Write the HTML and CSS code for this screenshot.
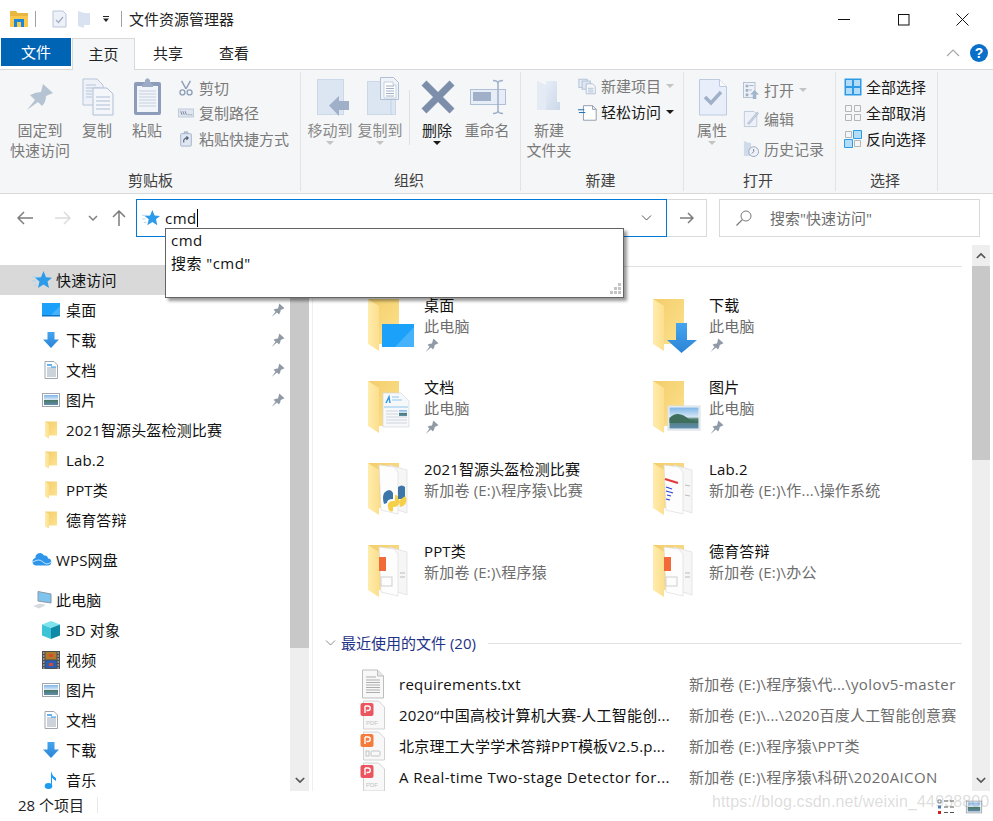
FILE: index.html
```html
<!DOCTYPE html>
<html lang="zh-CN">
<head>
<meta charset="utf-8">
<title>文件资源管理器</title>
<link rel="stylesheet" href="styles.css">
</head>
<body>
<svg class="defs" xmlns="http://www.w3.org/2000/svg">
  <defs>
    <linearGradient id="gFolder" x1="0" y1="0" x2="1" y2="1"><stop offset="0" stop-color="#f3cd6b"/><stop offset="1" stop-color="#fde28e"/></linearGradient>
    <linearGradient id="gFront" x1="0" y1="0" x2="1" y2="0"><stop offset="0" stop-color="#ffecac"/><stop offset="1" stop-color="#fcdf8e"/></linearGradient>
    <linearGradient id="gBlue" x1="0" y1="0" x2="0" y2="1"><stop offset="0" stop-color="#45a5f0"/><stop offset="1" stop-color="#2b84d6"/></linearGradient>
    <linearGradient id="gSky" x1="0" y1="0" x2="0" y2="1"><stop offset="0" stop-color="#7fb6e8"/><stop offset=".45" stop-color="#d5e6f4"/><stop offset=".55" stop-color="#4c7a6a"/><stop offset="1" stop-color="#5f8cb0"/></linearGradient>
    <linearGradient id="gNew" x1="0" y1="0" x2="1" y2="1"><stop offset="0" stop-color="#e6edf6"/><stop offset="1" stop-color="#ccd8e8"/></linearGradient>
    <symbol id="pin" viewBox="0 0 16 16"><path d="M1.500 15 L5.500 9.700 L3.500 7.800 Q6 6.600 8 6.600 L9.300 1.500 L14.500 6.300 L10.700 8 Q10.700 10.500 9 12.400 L7 10.400 Z" fill="#8f9aa6"/></symbol>
    <symbol id="star" viewBox="0 0 20 20"><path d="M0 7h6M0 11h4M2 15h3" stroke="#a9d4f5" stroke-width="1"/><path d="M11.500 1 L14 7.200 L20 7.700 L15.500 11.500 L17 18 L11.500 14.500 L6 18 L7.500 11.500 L3 7.700 L9 7.200 Z" fill="#2b9bea"/></symbol>
    <symbol id="desk" viewBox="0 0 20 20"><rect x="1" y="3" width="18" height="13" fill="#1ba1fa"/><path d="M9 16 L19 6 V16Z" fill="#45b2fb"/><rect x="1" y="15" width="18" height="1.500" fill="#0d75c4"/></symbol>
    <symbol id="down" viewBox="0 0 20 20"><path d="M6.500 2h7v7.500H18L10 18 2 9.500h4.500Z" fill="url(#gBlue)"/></symbol>
    <symbol id="doc" viewBox="0 0 20 20"><path d="M4 1.500h9l3.500 3.500v13.500H4Z" fill="#fff" stroke="#9fa6ad"/><path d="M6 5h5" stroke="#2e9ae6" stroke-width="1.500"/><path d="M6 8h9M6 10h9M6 12h9M6 14h9M6 16h9" stroke="#9aa7b5"/><path d="M10 7h5" stroke="#2e9ae6"/></symbol>
    <symbol id="pic" viewBox="0 0 20 20"><rect x="1.500" y="3.500" width="17" height="13" fill="#fff" stroke="#9fa6ad"/><rect x="3" y="5" width="14" height="10" fill="url(#gSky)"/></symbol>
    <symbol id="fold" viewBox="0 0 20 20"><path d="M4 1.500h12v14H7Z" fill="url(#gFolder)"/><path d="M4 1.500 L8 4 V18.500 L4 16.500Z" fill="url(#gFront)"/></symbol>
    <symbol id="cloud" viewBox="0 0 20 20"><path d="M4.500 15.500 A3.800 3.800 0 0 1 3.500 8 A4.500 4.500 0 0 1 12 5.500 A3.500 3.500 0 0 1 16 8.500 A3.500 3.500 0 0 1 15.500 15.500Z" fill="#2d96ea"/><path d="M1 12 Q7 8 11 12 T19 12" stroke="#bfe0fa" stroke-width="1" fill="none"/></symbol>
    <symbol id="pc" viewBox="0 0 20 20"><path d="M6 1.500 L19 4 V13 L6 11Z" fill="#7fc4ee" stroke="#8a98a6"/><path d="M1 16 L8 13.500 L14 15 L7 18.500Z" fill="#d5dadf"/></symbol>
    <symbol id="cube" viewBox="0 0 20 20"><path d="M10 1 L19 4.500 L10 8 L1 4.500Z" fill="#7fe3ee"/><path d="M1 4.500 L10 8 V19 L1 15.500Z" fill="#3cc4d6"/><path d="M19 4.500 L10 8 V19 L19 15.500Z" fill="#0f8aa6"/></symbol>
    <symbol id="film" viewBox="0 0 20 20"><rect x="1" y="1" width="18" height="18" fill="#4f4f4f"/><rect x="4.500" y="2" width="11" height="7.500" fill="#b0792c"/><rect x="4.500" y="10.500" width="11" height="7.500" fill="#2a5fb8"/><path d="M8 4h4v3H8ZM8 13h4v3H8Z" fill="#d84a2c"/><path d="M2 3h1.500M2 6h1.500M2 9h1.500M2 12h1.500M2 15h1.500M2 18h1.500M16.500 3h1.500M16.500 6h1.500M16.500 9h1.500M16.500 12h1.500M16.500 15h1.500M16.500 18h1.500" stroke="#ddd"/></symbol>
    <symbol id="music" viewBox="0 0 20 20"><ellipse cx="7.500" cy="16" rx="3.800" ry="3" fill="#1c9bf0"/><path d="M10 16 V1 Q11 6 15 8 V11 Q12 9 11 7.500 V16Z" fill="#1c9bf0"/></symbol>
    <symbol id="tile" viewBox="0 0 50 56"><path d="M1 2h31v45H12Z" fill="url(#gFolder)"/><path d="M1 2 L12 9 V54 L1 47Z" fill="url(#gFront)"/></symbol>
    <symbol id="txt" viewBox="0 0 24 30"><path d="M1.500 1h15l6 6v22h-21Z" fill="#f8f8f8" stroke="#bdbdbd"/><path d="M16.500 1v6h6" fill="#e6e6e6" stroke="#bdbdbd"/><path d="M5 8h10M5 11h14M5 13.500h14M5 16h14M5 18.500h14M5 21h14M5 23.500h14" stroke="#adadad"/></symbol>
    <symbol id="pdf" viewBox="0 0 26 30"><path d="M3.500 1h15l6 6v22h-21Z" fill="#f8f8f8" stroke="#d2d2d2"/><rect x="0.500" y="3" width="13" height="13" rx="2" fill="#ea5560"/><path d="M5 6 h3a2.200 2.200 0 0 1 0 4.500H6.500 M5 6 v7" stroke="#fff" stroke-width="1.400" fill="none"/><text x="6" y="25" class="pdf-t">PDF</text></symbol>
    <symbol id="ppt" viewBox="0 0 26 30"><path d="M3.500 1h15l6 6v22h-21Z" fill="#f8f8f8" stroke="#d2d2d2"/><rect x="0.500" y="3" width="13" height="13" rx="2" fill="#f57b3b"/><path d="M5 6 h3a2.200 2.200 0 0 1 0 4.500H6.500 M5 6 v7" stroke="#fff" stroke-width="1.400" fill="none"/><rect x="6" y="20" width="3" height="5" fill="none" stroke="#c4c4c4"/><rect x="11" y="20" width="9" height="5" rx="1" fill="none" stroke="#c4c4c4"/></symbol>
    <symbol id="pages" viewBox="0 0 50 56"><path d="M1 2h31v45H12Z" fill="url(#gFolder)"/><path d="M22 4 L40 9 V52 L28 48Z" fill="#f6f6f6" stroke="#dcdcdc" stroke-width=".7"/><path d="M12 4 L27 6 L31 11 V53 L14 49Z" fill="#fdfdfd" stroke="#dcdcdc" stroke-width=".7"/><path d="M1 2 L12 9 V54 L1 47Z" fill="url(#gFront)"/></symbol>
  </defs>
</svg>

<div class="titlebar">
  <svg class="t-app" viewBox="0 0 18 18"><path d="M0 1h6l1.500 2H18v3H0Z" fill="#e9b63f"/><path d="M0 6h18v11H0Z" fill="#f8c94e"/><path d="M4 9h10v8h-3v-5H7v5H4Z" fill="#1b87d8"/></svg>
  <span class="t-sep"></span>
  <svg class="t-q1" viewBox="0 0 15 18"><path d="M1 1h10l3 3v13H1Z" fill="#eef2f8" stroke="#b8c5d8"/><path d="M4 10l2.500 2.500L11 7" fill="none" stroke="#a0aec2" stroke-width="1.300"/></svg>
  <svg class="t-q2" viewBox="0 0 14 18"><path d="M1 1 L7 3 H13 V15 H7 V18 L1 16Z" fill="#d8e2f0"/></svg>
  <svg class="t-drop" viewBox="0 0 8 7"><path d="M1 .5h6" stroke="#222"/><path d="M1 2.500h6L4 6Z" fill="#222"/></svg>
  <span class="t-sep t-sep2"></span>
  <span class="t-title">文件资源管理器</span>
  <span class="t-spacer"></span>
  <svg class="w-btn w-min" viewBox="0 0 13 13"><path d="M0 6.500h12" stroke="#111"/></svg>
  <svg class="w-btn w-max" viewBox="0 0 13 13"><rect x="1.500" y="1.500" width="10.500" height="10.500" fill="none" stroke="#111"/></svg>
  <svg class="w-btn" viewBox="0 0 13 13"><path d="M.5.500l12 12M12.500.500l-12 12" stroke="#111"/></svg>
</div>

<div class="tabs">
  <span class="tab tab-file">文件</span>
  <span class="tab tab-active">主页</span>
  <span class="tab tab-plain">共享</span>
  <span class="tab tab-plain">查看</span>
  <span class="t-spacer"></span>
  <svg class="collapse" viewBox="0 0 14 8"><path d="M1 7l6-6 6 6" fill="none" stroke="#a8a8a8" stroke-width="1.200"/></svg>
  <span class="help">?</span>
</div>

<div class="ribbon">
  <section class="group g1">
    <div class="g-body">
      <div class="big w60"><svg class="big-i" viewBox="0 0 40 40"><path d="M7 33 L15 23 L10 18 Q16 15 21 15 L23 7 L33 16 L26 19 Q26 25 22 29 L18 25 Z" fill="#b6c3d3"/></svg><span>固定到<br>快速访问</span></div>
      <div class="big w50 ml2"><svg class="big-i" viewBox="0 0 40 40"><path d="M6 2h14l6 6v20H6Z" fill="#eef2f8" stroke="#b6c5da"/><path d="M9 8h10M9 11h14M9 14h6M9 17h6M9 20h6" stroke="#b6c5da"/><path d="M16 11h14l6 6v21H16Z" fill="#f4f6fa" stroke="#aebfd6"/><path d="M19 20h14M19 24h14M19 28h14M19 32h14" stroke="#aebfd6"/></svg><span>复制</span></div>
      <div class="big w50"><svg class="big-i" viewBox="0 0 40 40"><rect x="7" y="5" width="27" height="33" rx="2" fill="#8c9cba"/><rect x="10" y="9" width="21" height="26" fill="#f1f4f9"/><path d="M12 14h17M12 17h17M12 20h17M12 23h17M12 26h17M12 29h17" stroke="#c4cfe0"/><path d="M15 8 L18 5 V3 L20.500 1 L23 3 V5 L26 8 V10 H15Z" fill="#9cabc6"/></svg><span>粘贴</span></div>
      <div class="col small-col c-g1">
        <div class="s-row"><svg class="s-i" viewBox="0 0 18 18"><path d="M4 1l5 9M14 1L9 10" stroke="#8e9fb8" stroke-width="1.600"/><circle cx="5" cy="14" r="2.800" fill="none" stroke="#8e9fb8" stroke-width="1.500"/><circle cx="13" cy="14" r="2.800" fill="none" stroke="#8e9fb8" stroke-width="1.500"/></svg><span>剪切</span></div>
        <div class="s-row"><svg class="s-i" viewBox="0 0 18 18"><rect x=".5" y="4.500" width="17" height="9" fill="#dfe6f0" stroke="#bcc8d8"/><path d="M3 7l1.500 4M5.500 7L7 11M8 7l1.500 4" stroke="#6c7a90"/><path d="M11 11h1M13 11h1M15 11h1" stroke="#6c7a90"/></svg><span>复制路径</span></div>
        <div class="s-row"><svg class="s-i" viewBox="0 0 18 18"><rect x="3" y="3" width="12" height="14" rx="1" fill="#dfe6f0" stroke="#9fb0c8"/><path d="M7 3V1h4v2" fill="#b4c3d8" stroke="#9fb0c8"/><path d="M6.500 13v-3l2-2H11M9.500 6l2 2-2 2" fill="none" stroke="#4a5a74" stroke-width="1.200"/></svg><span>粘贴快捷方式</span></div>
      </div>
    </div>
    <div class="g-label">剪贴板</div>
  </section>

  <section class="group g2">
    <div class="g-body">
      <div class="big w50"><svg class="big-i" viewBox="0 0 40 40"><rect x="7.500" y="2.500" width="26" height="35" fill="#dce6f3" stroke="#ccd8e8"/><path d="M39 24v9H29v6L19 28.500 29 19v5Z" fill="#a0b0c8"/></svg><span class="dis-t">移动到</span><i class="caret c-dis"></i></div>
      <div class="big w50"><svg class="big-i" viewBox="0 0 40 40"><rect x="7.500" y="4.500" width="28" height="33" fill="#dce6f3" stroke="#ccd8e8"/><path d="M31 5v33" stroke="#c4d2e4"/><path d="M20.500 .5h13l5 5v17h-18Z" fill="#f0f3f8" stroke="#aebfd6"/><path d="M24 5h9v3h3v13H24Z" fill="#fff" stroke="#aebfd6" stroke-width=".7"/><path d="M26 9h8M26 11.500h8M26 14h8M26 16.500h8M26 19h8" stroke="#a0aec2"/></svg><span class="dis-t">复制到</span><i class="caret c-dis"></i></div>
      <span class="v-sep"></span>
      <div class="big w50"><svg class="big-i" viewBox="0 0 40 40"><path d="M7 6l28 28M35 6L7 34" stroke="#7d8eab" stroke-width="7"/></svg><span class="dark">删除</span><i class="caret"></i></div>
      <div class="big w50"><svg class="big-i" viewBox="0 0 40 40"><rect x="3.500" y="12.500" width="35" height="15" fill="#e6edf6" stroke="#aebfd6"/><rect x="6" y="15" width="18" height="9" fill="#a0b0c8"/><path d="M26 3.500q5 0 5 3v27q0 3-5 3M36 3.500q-5 0-5 3v27q0 3 5 3" fill="none" stroke="#9fb0c8" stroke-width="1.500"/></svg><span>重命名</span></div>
    </div>
    <div class="g-label">组织</div>
  </section>

  <section class="group g3">
    <div class="g-body">
      <div class="big w50"><svg class="big-i" viewBox="0 0 40 40"><path d="M8 4 L17 8 V33 H8Z" fill="#e4ebf5"/><path d="M17 4h11v21h3v8H17Z" fill="url(#gNew)"/></svg><span>新建<br>文件夹</span></div>
      <div class="col small-col c-g3">
        <div class="s-row"><svg class="s-i s-i21" viewBox="0 0 22 18"><rect x="1" y="1" width="9" height="9" fill="#e6edf6" stroke="#aebfd6"/><rect x="4.500" y="3" width="9" height="9" fill="#dfe6f0" stroke="#aebfd6"/><path d="M9 6h7l3 3v8H9Z" fill="#f4f6fa" stroke="#aebfd6"/><path d="M11 11h6M11 13h6M11 15h6" stroke="#aebfd6"/></svg><span>新建项目</span><i class="caret-s c-dis"></i></div>
        <div class="s-row s-dark"><svg class="s-i s-i21" viewBox="0 0 22 18"><path d="M6 1.500h10l4 4v12H6Z" fill="#fff" stroke="#8c96a4"/><path d="M16 1.500v4h4" fill="none" stroke="#8c96a4"/><path d="M0 6h7M1 9h7" stroke="#2273b8" stroke-width="1.200"/></svg><span>轻松访问</span><i class="caret-s"></i></div>
      </div>
    </div>
    <div class="g-label">新建</div>
  </section>

  <section class="group g4">
    <div class="g-body">
      <div class="big w50"><svg class="big-i" viewBox="0 0 40 40"><path d="M7.500 2.500h20l7 7v28.500h-27Z" fill="#e9effa" stroke="#bccbe0"/><path d="M27.500 2.500v7h7" fill="#f7f9fc" stroke="#bccbe0"/><path d="M13 20l6 6 10-11" fill="none" stroke="#a0b0c8" stroke-width="3.500"/></svg><span>属性</span><i class="caret c-dis"></i></div>
      <div class="col small-col c-g4">
        <div class="s-row s-r30"><svg class="s-i" viewBox="0 0 18 20"><rect x=".5" y="1.500" width="13" height="17" fill="#eef2f8" stroke="#b0bdce"/><path d="M3 4h3v3H3ZM3 9h3v3H3ZM3 14h3v3H3Z" fill="#a0aec2"/><path d="M7 5h5M7 10h3" stroke="#a0aec2"/><path d="M13 10l5 5h-3v5h-4v-5H8Z" fill="#a0b4cc"/></svg><span>打开</span><i class="caret-s c-dis"></i></div>
        <div class="s-row s-r30"><svg class="s-i" viewBox="0 0 18 20"><path d="M1.500 1.500h11l3 3v14h-14Z" fill="#eef2f8" stroke="#b8c6da"/><path d="M5 15L16 2l1.500 1.500L7 16Z" fill="#c5d1e1" stroke="#a0aec2" stroke-width=".6"/></svg><span>编辑</span></div>
        <div class="s-row s-r30"><svg class="s-i" viewBox="0 0 18 20"><path d="M1 1l5 2h3v15H1Z" fill="#cfdbea"/><circle cx="12" cy="13" r="5.500" fill="#eef2f8" stroke="#8e9fb8"/><path d="M12 10v3l-2 2" stroke="#6c7a90" fill="none"/></svg><span>历史记录</span></div>
      </div>
    </div>
    <div class="g-label">打开</div>
  </section>

  <section class="group g5">
    <div class="g-body">
      <div class="col small-col c-g5">
        <div class="s-row s-dark"><svg class="s-i" viewBox="0 0 18 18"><rect x=".5" y=".5" width="17" height="17" fill="#2e9ae6"/><path d="M2 2h6v6H2ZM10 2h6v6h-6ZM2 10h6v6H2ZM10 10h6v6h-6Z" fill="#b2dcf8"/></svg><span>全部选择</span></div>
        <div class="s-row s-dark"><svg class="s-i" viewBox="0 0 18 18"><path d="M1.500 1.500h6v6h-6ZM10.500 1.500h6v6h-6ZM1.500 10.500h6v6h-6ZM10.500 10.500h6v6h-6Z" fill="none" stroke="#b5b5b5"/></svg><span>全部取消</span></div>
        <div class="s-row s-dark"><svg class="s-i" viewBox="0 0 18 18"><path d="M1.500 1.500h6v6h-6ZM10.500 10.500h6v6h-6Z" fill="none" stroke="#b5b5b5"/><path d="M9.500 .5h8v8h-8ZM.5 9.500h8v8h-8Z" fill="#b2dcf8" stroke="#2e9ae6"/></svg><span>反向选择</span></div>
      </div>
    </div>
    <div class="g-label">选择</div>
  </section>
</div>

<div class="addr-row">
  <svg class="n-back" viewBox="0 0 16 14"><path d="M16 7H1M7 1L1 7l6 6" fill="none" stroke="#7c7c7c" stroke-width="1.500"/></svg>
  <svg class="n-fwd" viewBox="0 0 16 14"><path d="M0 7h15M9 1l6 6-6 6" fill="none" stroke="#dcdcdc" stroke-width="1.500"/></svg>
  <svg class="n-drop" viewBox="0 0 10 7"><path d="M1 1l4 4 4-4" fill="none" stroke="#808080" stroke-width="1.500"/></svg>
  <svg class="n-up" viewBox="0 0 14 16"><path d="M7 16V1M1 7l6-6 6 6" fill="none" stroke="#7c7c7c" stroke-width="1.500"/></svg>
  <div class="addr">
    <svg class="a-star"><use href="#star"/></svg>
    <span class="a-text">cmd</span><span class="a-caret"></span>
    <span class="t-spacer"></span>
    <svg class="a-chev" viewBox="0 0 10 6"><path d="M.5.500L5 5 9.500.500" fill="none" stroke="#555"/></svg>
  </div>
  <div class="go"><svg class="go-i" viewBox="0 0 14 12"><path d="M0 6h13M8 1l5 5-5 5" fill="none" stroke="#7c7c7c" stroke-width="1.500"/></svg></div>
  <div class="search">
    <svg class="s-glass" viewBox="0 0 16 16"><circle cx="10" cy="6" r="5" fill="none" stroke="#777"/><path d="M6.300 9.700L.5 15.500" stroke="#777" stroke-width="1.200"/></svg>
    <span>搜索"快速访问"</span>
  </div>
  <div class="popup">
    <div>cmd</div>
    <div>搜索 "cmd"</div>
    <svg class="grip" viewBox="0 0 12 12"><path d="M9 0h3v3H9ZM5 4h3v3H5ZM9 4h3v3H9ZM1 8h3v3H1ZM5 8h3v3H5ZM9 8h3v3H9Z" fill="#c4c4c4"/></svg>
  </div>
</div>

<div class="content">
  <nav class="sidebar">
    <div class="row l1 sel"><svg class="r-i"><use href="#star"/></svg><span>快速访问</span></div>
    <div class="row l2"><svg class="r-i"><use href="#desk"/></svg><span>桌面</span><svg class="r-pin"><use href="#pin"/></svg></div>
    <div class="row l2"><svg class="r-i"><use href="#down"/></svg><span>下载</span><svg class="r-pin"><use href="#pin"/></svg></div>
    <div class="row l2"><svg class="r-i"><use href="#doc"/></svg><span>文档</span><svg class="r-pin"><use href="#pin"/></svg></div>
    <div class="row l2"><svg class="r-i"><use href="#pic"/></svg><span>图片</span><svg class="r-pin"><use href="#pin"/></svg></div>
    <div class="row l2"><svg class="r-i"><use href="#fold"/></svg><span>2021智源头盔检测比赛</span></div>
    <div class="row l2"><svg class="r-i"><use href="#fold"/></svg><span>Lab.2</span></div>
    <div class="row l2"><svg class="r-i"><use href="#fold"/></svg><span>PPT类</span></div>
    <div class="row l2"><svg class="r-i"><use href="#fold"/></svg><span>德育答辩</span></div>
    <div class="row l1 mt10"><svg class="r-i"><use href="#cloud"/></svg><span>WPS网盘</span></div>
    <div class="row l1 mt10"><svg class="r-i"><use href="#pc"/></svg><span>此电脑</span></div>
    <div class="row l2"><svg class="r-i"><use href="#cube"/></svg><span>3D 对象</span></div>
    <div class="row l2"><svg class="r-i"><use href="#film"/></svg><span>视频</span></div>
    <div class="row l2"><svg class="r-i"><use href="#pic"/></svg><span>图片</span></div>
    <div class="row l2"><svg class="r-i"><use href="#doc"/></svg><span>文档</span></div>
    <div class="row l2"><svg class="r-i"><use href="#down"/></svg><span>下载</span></div>
    <div class="row l2"><svg class="r-i"><use href="#music"/></svg><span>音乐</span></div>
  </nav>
  <div class="sbar">
    <div class="sb-btn"><svg class="sb-a" viewBox="0 0 12 8"><path d="M1 7l5-5 5 5" fill="none" stroke="#555" stroke-width="2"/></svg></div>
    <div class="sb-thumb th-nav"></div>
    <div class="sb-track"></div>
    <div class="sb-btn"><svg class="sb-a" viewBox="0 0 12 8"><path d="M1 1l5 5 5-5" fill="none" stroke="#555" stroke-width="2"/></svg></div>
  </div>
  <main class="main">
    <div class="sec sec1"><svg class="sec-c" viewBox="0 0 10 6"><path d="M.5.500L5 5 9.500.500" fill="none" stroke="#8a8a8a"/></svg><span class="sec-t">常用文件夹 (8)</span><span class="sec-l"></span></div>
    <div class="tiles">
      <div class="tile"><svg class="tile-i" viewBox="0 0 50 56"><use href="#tile" width="50" height="56"/><rect x="15" y="27" width="32" height="23" fill="#1ba1fa"/><path d="M28 50 L47 30 V50Z" fill="#45b2fb"/></svg><div class="tile-t"><div class="n">桌面</div><div class="p">此电脑</div><svg class="tile-pin"><use href="#pin"/></svg></div></div>
      <div class="tile"><svg class="tile-i" viewBox="0 0 50 56"><use href="#tile" width="50" height="56"/><path d="M24 26h11v17h10L29.500 56 15 43h9Z" fill="url(#gBlue)"/></svg><div class="tile-t"><div class="n">下载</div><div class="p">此电脑</div><svg class="tile-pin"><use href="#pin"/></svg></div></div>
      <div class="tile"><svg class="tile-i" viewBox="0 0 50 56"><use href="#tile" width="50" height="56"/><path d="M16 14h18l8 8v26H16Z" fill="#f7f8fa" stroke="#d5d8dc" stroke-width=".7"/><path d="M19 24 l3-6 1 6" fill="none" stroke="#2e9ae6" stroke-width="1.500"/><path d="M25 18h7M25 21h10M17 28h24" stroke="#8cc8f0"/><path d="M19 32h12M19 35h12M19 38h21M19 41h21M19 44h21" stroke="#cfd4da"/><rect x="32" y="31" width="8" height="6" fill="url(#gSky)"/></svg><div class="tile-t"><div class="n">文档</div><div class="p">此电脑</div><svg class="tile-pin"><use href="#pin"/></svg></div></div>
      <div class="tile"><svg class="tile-i" viewBox="0 0 50 56"><use href="#tile" width="50" height="56"/><rect x="16" y="27" width="32" height="24" fill="#f2f4f6" stroke="#d8dde2"/><rect x="17.500" y="28.500" width="29" height="21" fill="url(#gSky)"/><path d="M17.500 39 Q26 30 38 41 L46 42 V44 H17.500Z" fill="#3f6e5c"/></svg><div class="tile-t"><div class="n">图片</div><div class="p">此电脑</div><svg class="tile-pin"><use href="#pin"/></svg></div></div>
      <div class="tile"><svg class="tile-i" viewBox="0 0 50 56"><use href="#pages" width="50" height="56"/><path d="M17 32q6-6 9 0v6q-6 0-6 4l-3 1q-2-6 0-11Z" fill="#3d77aa"/><path d="M21 46q-1-7 7-6v-6q5 0 4 8 0 4-6 4v4q-4 2-5-4Z" fill="#f5cf47"/><path d="M31 26q4-3 7 0v12h-7Z" fill="#3d77aa"/><path d="M32 40q6-6 7-4 2 8-6 10Z" fill="#f5cf47"/></svg><div class="tile-t"><div class="n">2021智源头盔检测比赛</div><div class="p">新加卷 (E:)\程序猿\比赛</div></div></div>
      <div class="tile"><svg class="tile-i" viewBox="0 0 50 56"><use href="#pages" width="50" height="56"/><path d="M13 18 l13 4" stroke="#e5383b" stroke-width="2"/><path d="M14 26l6 2M14 30l7 2M15 34l4 1M14 38l4 1" stroke="#2a3fd8" stroke-width="1.200"/><path d="M33 24l5 1M33 34l5 1" stroke="#bbb"/></svg><div class="tile-t"><div class="n">Lab.2</div><div class="p">新加卷 (E:)\作...\操作系统</div></div></div>
      <div class="tile"><svg class="tile-i" viewBox="0 0 50 56"><use href="#pages" width="50" height="56"/><rect x="12" y="14" width="7" height="14" fill="#f26a3a"/><rect x="14" y="34" width="11" height="9" fill="none" stroke="#cfcfcf"/><path d="M33 30h5M33 34h5" stroke="#bbb"/></svg><div class="tile-t"><div class="n">PPT类</div><div class="p">新加卷 (E:)\程序猿</div></div></div>
      <div class="tile"><svg class="tile-i" viewBox="0 0 50 56"><use href="#pages" width="50" height="56"/><rect x="12" y="14" width="7" height="14" fill="#f26a3a"/><rect x="14" y="34" width="11" height="9" fill="none" stroke="#cfcfcf"/><path d="M33 30h5M33 34h5" stroke="#bbb"/></svg><div class="tile-t"><div class="n">德育答辩</div><div class="p">新加卷 (E:)\办公</div></div></div>
    </div>
    <div class="sec sec2"><svg class="sec-c" viewBox="0 0 10 6"><path d="M.5.500L5 5 9.500.500" fill="none" stroke="#8a8a8a"/></svg><span class="sec-t">最近使用的文件 (20)</span><span class="sec-l"></span></div>
    <div class="files">
      <div class="file"><svg class="f-i"><use href="#txt" x="1" width="24" height="30"/></svg><span class="f-n f-lat">requirements.txt</span><span class="f-p">新加卷 (E:)\程序猿\代...\<span class="lat">yolov5-master</span></span></div>
      <div class="file"><svg class="f-i"><use href="#pdf"/></svg><span class="f-n">2020“中国高校计算机大赛-人工智能创...</span><span class="f-p">新加卷 (E:)\...\2020百度人工智能创意赛</span></div>
      <div class="file"><svg class="f-i"><use href="#ppt"/></svg><span class="f-n">北京理工大学学术答辩PPT模板V2.5.p...</span><span class="f-p">新加卷 (E:)\程序猿\PPT类</span></div>
      <div class="file"><svg class="f-i"><use href="#pdf"/></svg><span class="f-n f-wide">A Real-time Two-stage Detector for...</span><span class="f-p">新加卷 (E:)\程序猿\科研\<span class="lat">2020AICON</span></span></div>
    </div>
  </main>
  <div class="sbar sbar-r">
    <div class="sb-btn"><svg class="sb-a" viewBox="0 0 12 8"><path d="M1 7l5-5 5 5" fill="none" stroke="#555" stroke-width="2"/></svg></div>
    <div class="sb-thumb th-main"></div>
    <div class="sb-track"></div>
    <div class="sb-btn"><svg class="sb-a" viewBox="0 0 12 8"><path d="M1 1l5 5 5-5" fill="none" stroke="#555" stroke-width="2"/></svg></div>
  </div>
</div>

<footer class="status">
  <span class="st-count">28 个项目</span>
  <span class="st-div"></span>
  <span class="t-spacer"></span>
  <svg class="st-v1" viewBox="0 0 18 16"><path d="M1 1h3v3H1Z" fill="none" stroke="#7a8a9a"/><path d="M1 6.500h3v3H1Z" fill="#4a7ab0"/><path d="M1 12h3v3H1Z" fill="#c22"/><path d="M7 2h4M13 2h4M7 8h4M13 8h4M7 13.500h4M13 13.500h4" stroke="#555"/></svg>
  <svg class="st-v2"><use href="#pic" width="18" height="18"/></svg>
  <span class="wm">https://blog.csdn.net/weixin_44938800</span>
</footer>
</body>
</html>
```

FILE: styles.css
```css
* { box-sizing: border-box; }
html, body { margin: 0; padding: 0; }
body {
  position: relative;
  width: 993px;
  height: 821px;
  overflow: hidden;
  background: #fff;
  color: #1a1a1a;
  font: 15px/20px "Open Sans", "Noto Sans CJK SC", sans-serif;
}
.defs { display: block; width: 0; height: 0; }
svg { display: block; flex: none; }
.t-spacer { flex: 1; }
.pdf-t { font: 6px "Liberation Sans", sans-serif; fill: #c4c4c4; }

/* title bar */
.titlebar { display: flex; align-items: center; height: 38px; padding-left: 10px; }
.t-app { width: 18px; height: 18px; }
.t-sep { width: 1px; height: 16px; background: #a0a0a0; margin-left: 7px; }
.t-q1 { width: 15px; height: 18px; margin-left: 16px; }
.t-q2 { width: 14px; height: 18px; margin-left: 10px; }
.t-drop { width: 8px; height: 7px; margin-left: 11px; }
.t-sep2 { margin-left: 11px; }
.t-title { margin-left: 7px; color: #222; }
.w-btn { width: 13px; height: 13px; }
.w-min { margin-right: 46px; }
.w-max { margin-right: 46px; }
.titlebar .w-btn:last-child { margin-right: 24px; }

/* tabs */
.tabs { display: flex; align-items: flex-start; height: 32px; padding-left: 1px; position: relative; z-index: 1; }
.tab { display: flex; align-items: center; justify-content: center; height: 32px; }
.tab-file { width: 70px; height: 28px; background: #0064b4; color: #fff; }
.tab-active { width: 63px; margin-left: 1px; background: #f5f6f7; border: 1px solid #d9d9d9; border-bottom: 0; padding-bottom: 2px; color: #222; }
.tab-plain { width: 66px; padding-bottom: 2px; color: #222; }
.collapse { width: 14px; height: 8px; margin-top: 11px; margin-right: 10px; }
.help { width: 18px; height: 18px; margin: 6px 5px 0 0; border-radius: 50%; background: #0a6fc9; color: #fff; font: 700 14px/18px "Liberation Sans", sans-serif; text-align: center; }

/* ribbon */
.ribbon { display: flex; height: 125px; margin-top: -1px; background: #f5f6f7; border-top: 1px solid #d9d9d9; border-bottom: 1px solid #d9d9d9; color: #7a7a7a; }
.group { display: flex; flex-direction: column; position: relative; height: 123px; }
.group::after { content: ""; position: absolute; right: 0; top: 2px; bottom: 2px; width: 1px; background: #e2e3e4; }
.g1 { width: 301px; }
.g2 { width: 220px; }
.g3 { width: 163px; }
.g4 { width: 152px; }
.g5 { width: 102px; }
.g-body { display: flex; flex: 1; }
.g1 .g-body { padding-left: 10px; }
.g2 .g-body { padding-left: 4px; }
.g3 .g-body { padding-left: 3px; }
.g4 .g-body { padding-left: 3px; }
.g5 .g-body { padding-left: 7px; }
.g-label { height: 23px; padding-bottom: 3px; text-align: center; color: #3f3f3f; line-height: 20px; }
.g2 .g-label, .g3 .g-label, .g4 .g-label, .g5 .g-label { padding-right: 4px; }
.big { display: flex; flex-direction: column; align-items: center; text-align: center; white-space: nowrap; }
.big-i { width: 40px; height: 40px; margin: 7px 0 3px; }
.w60 { width: 60px; }
.w50 { width: 50px; }
.ml2 { margin-left: 2px; }
.dark { color: #1a1a1a; }
.dis-t { color: #8a8a8a; }
.caret { display: block; width: 0; height: 0; margin-top: 1px; border: 4px solid transparent; border-bottom: 0; border-top-color: #1a1a1a; }
.caret-s { display: block; width: 0; height: 0; border: 4px solid transparent; border-bottom: 0; border-top-color: #1a1a1a; }
.c-dis { border-top-color: #c4c4c4; }
.v-sep { width: 1px; height: 55px; margin: 20px 2px 0 4px; background: #dfe0e1; }
.col { display: flex; flex-direction: column; }
.small-col { padding-top: 5px; }
.c-g1 { margin-left: 5px; padding-top: 5px; }
.c-g3 { margin-left: 4px; padding-top: 3px; }
.c-g4 { margin-left: 5px; }
.c-g5 { padding-top: 4px; }
.s-row { display: flex; align-items: center; height: 26px; gap: 5px; white-space: nowrap; }
.c-g1 .s-row { height: 25.5px; }
.s-r30 { height: 29.5px; }
.s-dark { color: #1a1a1a; }
.s-i { width: 16px; height: 18px; margin-left: 1px; }
.s-i.s-i21 { width: 20px; height: 17px; margin-left: 0; }
.c-g3 .s-row { gap: 3px; }
.c-g3 .caret-s { margin-left: 2px; }
.c-g5 .s-row { gap: 4px; }
.c-g5 .s-i { width: 18px; height: 18px; }

/* address row */
.addr-row { display: flex; align-items: flex-start; height: 51px; padding-top: 5px; position: relative; }
.n-back { width: 16px; height: 14px; margin: 12px 0 0 17px; }
.n-fwd { width: 16px; height: 14px; margin: 12px 0 0 22px; }
.n-drop { width: 10px; height: 7px; margin: 16px 0 0 17px; }
.n-up { width: 14px; height: 16px; margin: 11px 0 0 14px; }
.addr { display: flex; align-items: center; width: 531px; height: 38px; margin-left: 10px; padding: 0 14px 0 5px; border: 1px solid #0078d7; color: #111; }
.a-star { width: 18px; height: 18px; }
.a-text { margin-left: 5px; letter-spacing: .5px; }
.a-caret { width: 1px; height: 18px; background: #000; margin-left: 0; }
.a-chev { width: 11px; height: 6px; }
.go { display: flex; align-items: center; justify-content: center; width: 40px; height: 38px; border: 1px solid #d9d9d9; border-left: 0; }
.go-i { width: 14px; height: 12px; }
.search { display: flex; align-items: center; width: 261px; height: 38px; margin-left: 12px; padding-left: 16px; border: 1px solid #d9d9d9; color: #6d6d6d; }
.s-glass { width: 16px; height: 16px; margin-right: 18px; }
.popup { position: absolute; left: 165px; top: 34px; z-index: 5; width: 459px; height: 70px; padding-left: 5px; background: #fff; border: 1px solid #646464; box-shadow: 3px 3px 3px rgba(0,0,0,.4); line-height: 23px; letter-spacing: .45px; color: #111; }
.grip { position: absolute; right: 2px; bottom: 2px; width: 12px; height: 12px; }

/* content */
.content { display: flex; height: 546px; }
.sidebar { flex: none; width: 290px; height: 546px; padding-top: 20px; overflow: hidden; }
.row { display: flex; align-items: center; height: 30px; color: #111; white-space: nowrap; letter-spacing: .15px; }
.l1 { padding-left: 32px; gap: 4px; }
.l2 { padding-left: 41px; gap: 5px; }
.sel { background: #d9d9d9; }
.mt10 { margin-top: 10px; }
.r-i { width: 20px; height: 20px; }
.r-pin { width: 16px; height: 16px; margin-left: auto; margin-right: 4px; }
.sbar { display: flex; flex-direction: column; width: 19px; background: #eee; flex: none; }
.sb-btn { display: flex; align-items: center; justify-content: center; height: 21px; flex: none; }
.sb-a { width: 10px; height: 7px; }
.sb-thumb { background: #c8c8c8; flex: none; }
.th-nav { height: 382px; }
.th-main { height: 194px; }
.sb-track { flex: 1; }
.sbar-r { width: 18px; }
.main { flex: none; width: 660px; height: 546px; overflow: hidden; margin-left: 3px; padding: 8px 10px 0 12px; border-left: 1px solid #efefef; }
.sec { display: flex; align-items: center; height: 26px; color: #1e3287; }
.sec-c { width: 11px; height: 6px; margin-right: 5px; }
.sec-l { flex: 1; height: 1px; margin-left: 12px; background: #e2e2e2; }
.sec2 { margin-top: 7px; }
.tiles { display: grid; grid-template-columns: 285px 285px; margin: 16px 0 0 42px; }
.tile { display: flex; height: 82px; }
.tile-i { width: 50px; height: 56px; margin: 2px 7px 0 0; }
.tile-t { line-height: 21px; }
.n { color: #111; height: 21px; white-space: nowrap; letter-spacing: .15px; }
.p { color: #6d6d6d; height: 21px; white-space: nowrap; letter-spacing: .2px; }
.tile-pin { width: 16px; height: 16px; }
.files { margin-top: 12px; padding-left: 35px; }
.file { display: flex; align-items: center; height: 31px; white-space: nowrap; }
.f-i { width: 26px; height: 30px; margin-right: 13px; }
.f-n { flex: none; width: 290px; color: #111; letter-spacing: .2px; }
.f-lat { letter-spacing: .25px; }
.f-wide { letter-spacing: .43px; }
.f-p { color: #6d6d6d; letter-spacing: .2px; }
.lat { letter-spacing: .4px; }

/* status */
.status { display: flex; align-items: center; height: 29px; padding: 0 0 2px 18px; position: relative; color: #222; }
.st-count { width: 78px; }
.st-div { width: 1px; height: 16px; background: #e8e8e8; margin-left: 1px; }
.st-v1 { width: 18px; height: 16px; margin: 4px 10px 0 0; }
.st-v2 { width: 18px; height: 18px; margin: 4px 10px 0 0; }
.wm { position: absolute; left: 712px; top: 1px; font: 16px/20px "Liberation Sans", sans-serif; letter-spacing: .14px; color: rgba(140,140,140,.3); white-space: nowrap; }
```
